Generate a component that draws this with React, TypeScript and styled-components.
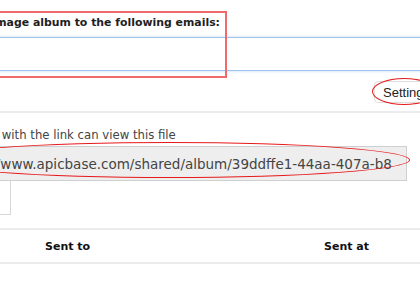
import styled, { createGlobalStyle } from 'styled-components';

const GlobalStyle = createGlobalStyle`
  html, body {
    margin: 0;
    padding: 0;
    background: #ffffff;
  }
`;

const Viewport = styled.div`
  position: relative;
  width: 420px;
  height: 283px;
  overflow: hidden;
  background: #ffffff;
`;

const Panel = styled.div`
  display: flex;
  flex-direction: column;
  width: 487px;
  margin-left: -48px;
  padding-top: 16px;
`;

const Title = styled.h4`
  margin: 0 0 7px;
  font-family: 'DejaVu Sans', Verdana, sans-serif;
  font-size: 10.9px;
  font-weight: 700;
  color: #1e1e1e;
  white-space: nowrap;
  line-height: 14px;
`;

const EmailInput = styled.textarea`
  box-sizing: border-box;
  width: 100%;
  height: 34px;
  margin: 0;
  border: 1px solid #9fc4ec;
  border-radius: 3px;
  box-shadow: 0 0 3px rgba(102, 160, 233, 0.45);
  resize: none;
  outline: none;
  font-family: 'DejaVu Sans', sans-serif;
`;

const SettingsRow = styled.div`
  display: flex;
  justify-content: flex-end;
  padding: 10px 0 8px;
  border-bottom: 2px solid #ececec;
`;

const SettingsButton = styled.button`
  height: 22px;
  padding: 0 8px;
  border: 1px solid #dedede;
  border-radius: 4px;
  background: #ffffff;
  font-family: 'Liberation Sans', Arial, sans-serif;
  font-size: 13px;
  color: #222;
`;

const Label = styled.div`
  margin-top: 15px;
  margin-left: 2px;
  font-family: 'DejaVu Sans', sans-serif;
  font-size: 11.7px;
  color: #444;
  white-space: nowrap;
  line-height: 14px;
`;

const LinkField = styled.div`
  box-sizing: border-box;
  display: flex;
  align-items: center;
  width: 455px;
  height: 35px;
  margin-top: 4px;
  padding: 0 14px 0 6px;
  border: 1px solid #cfcfcf;
  background: #eeeeee;
`;

const LinkText = styled.span`
  display: block;
  overflow: hidden;
  white-space: nowrap;
  font-family: 'DejaVu Sans', sans-serif;
  font-size: 13.5px;
  color: #444;
`;

const CopyButton = styled.button`
  box-sizing: border-box;
  width: 59px;
  height: 34px;
  margin: 0;
  border: 1px solid #d6d6d6;
  border-top: none;
  background: #ffffff;
  font-family: 'DejaVu Sans', sans-serif;
  font-size: 12px;
  color: #bbb;
  text-align: left;
  padding-left: 10px;
`;

const Table = styled.div`
  margin-top: 13px;
  border-top: 2px solid #ebebeb;
  border-bottom: 2px solid #ebebeb;
  display: grid;
  grid-template-columns: 85px 279px 1fr;
  height: 32px;
  align-items: center;
`;

const HeadCell = styled.div`
  padding-left: 8px;
  font-family: 'DejaVu Sans', Verdana, sans-serif;
  font-size: 11px;
  font-weight: 700;
  color: #111;
`;

const RedBox = styled.div`
  position: absolute;
  left: -10px;
  top: 11px;
  width: 233px;
  height: 63px;
  border: 2px solid #ef6b6b;
`;

const RedEllipse = styled.div<{ x: number; y: number; w: number; h: number }>`
  position: absolute;
  left: ${({ x }) => x}px;
  top: ${({ y }) => y}px;
  width: ${({ w }) => w}px;
  height: ${({ h }) => h}px;
  border: 1.5px solid #e8191b;
  border-radius: 50%;
  box-sizing: border-box;
`;

export default function App() {
  return (
    <>
      <GlobalStyle />
      <Viewport>
        <Panel>
          <Title>Share image album to the following emails:</Title>
          <EmailInput />
          <SettingsRow>
            <SettingsButton>Settings</SettingsButton>
          </SettingsRow>
          <Label>Anyone with the link can view this file</Label>
          <LinkField>
            <LinkText>http://www.apicbase.com/shared/album/39ddffe1-44aa-407a-b8c2-5e1f0a7d9b13</LinkText>
          </LinkField>
          <CopyButton>Copy</CopyButton>
          <Table>
            <HeadCell />
            <HeadCell>Sent to</HeadCell>
            <HeadCell>Sent at</HeadCell>
          </Table>
        </Panel>
        <RedBox />
        <RedEllipse x={372} y={78} w={64} h={27} />
        <RedEllipse x={-70} y={142} w={480} h={36} />
      </Viewport>
    </>
  );
}
